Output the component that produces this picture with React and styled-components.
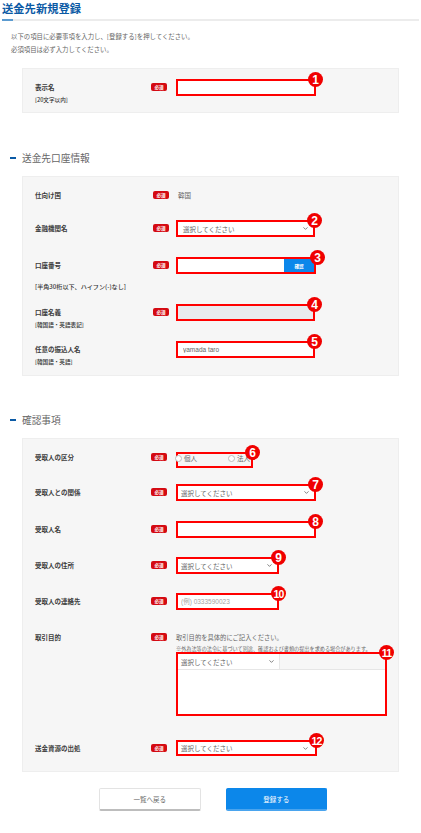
import React from "react";
import styled, { createGlobalStyle } from "styled-components";
import { ChevronDown } from "lucide-react";

const Global = createGlobalStyle`
  html, body { margin: 0; padding: 0; background: #fff; }
  body { font-family: "Noto Sans CJK JP", "Liberation Sans", sans-serif; color: #555; }
  * { box-sizing: border-box; }
`;

const Page = styled.div`
  width: 421px;
  height: 833px;
  overflow: hidden;
`;
const Title = styled.h1`
  margin: 0;
  padding-left: 2px;
  height: 19px;
  font-size: 11.3px;
  line-height: 17px;
  font-weight: 700;
  color: #0b5aa5;
`;
const TitleRule = styled.div`
  height: 2px;
  margin: 0 2px;
  background: linear-gradient(to right, #5b9bd0 0 11px, #ececec 11px);
`;
const Intro = styled.p`
  margin: 9px 0 0 11px;
  font-size: 6.4px;
  line-height: 13px;
  color: #666;
`;
const Heading = styled.h2`
  display: flex;
  align-items: center;
  margin: ${(p) => p.$top}px 0 11px 10px;
  height: 14px;
  font-size: 9.7px;
  font-weight: 400;
  color: #666;
  &::before {
    content: "";
    width: 6px;
    height: 2px;
    margin-right: 6px;
    background: #0b5aa5;
  }
`;
const Panel = styled.section`
  margin: ${(p) => p.$top || 0}px 22px 0;
  width: 377px;
  padding: 10px 0 0 12px;
  background: #f6f6f6;
  border: 1px solid #eeeeee;
`;
const Row = styled.div`
  display: grid;
  grid-template-columns: 116px 25px 1fr;
  align-items: start;
  height: ${(p) => p.$h}px;
`;
const LabelCell = styled.div`
  display: flex;
  flex-direction: column;
`;
const Label = styled.div`
  font-size: 6.5px;
  font-weight: 700;
  line-height: 17px;
  color: #3d3d3d;
`;
const Sub = styled.div`
  font-size: ${(p) => p.$size || 5.6}px;
  font-weight: 500;
  line-height: 8px;
  margin-top: ${(p) => p.$top ?? 0}px;
  color: #333;
  white-space: nowrap;
`;
const BadgeCell = styled.div`
  display: flex;
  align-items: center;
  height: 16px;
  padding-left: ${(p) => (p.$shift ? 2 : 0)}px;
`;
const Badge = styled.span`
  display: flex;
  align-items: center;
  justify-content: center;
  width: 16px;
  height: 8px;
  border-radius: 2px;
  background: #d40a12;
  color: #fff;
  font-size: 4.6px;
  font-weight: 700;
`;
const Field = styled.div`
  display: flex;
  flex-direction: column;
  align-items: flex-start;
  margin-top: ${(p) => p.$top || 0}px;
`;
const Frame = styled.div`
  position: relative;
  display: flex;
  flex-direction: ${(p) => (p.$column ? "column" : "row")};
  align-items: ${(p) => (p.$column ? "stretch" : "center")};
  width: ${(p) => p.$w}px;
  height: ${(p) => p.$hh || 17}px;
  border: 2px solid #ff0000;
  background: ${(p) => p.$bg || "#fff"};
`;
const Marker = styled.span`
  position: absolute;
  top: -9px;
  right: ${(p) => -9 + (p.$dx || 0)}px;
  display: flex;
  align-items: center;
  justify-content: center;
  width: 15px;
  height: 15px;
  border-radius: 50%;
  background: #f00000;
  color: #fff;
  font-family: "Liberation Sans", sans-serif;
  font-size: ${(p) => (p.$small ? 10.5 : 12)}px;
  letter-spacing: ${(p) => (p.$small ? -0.8 : 0)}px;
  font-weight: 700;
  z-index: 1;
`;
const TextInput = styled.input`
  flex: 1;
  min-width: 0;
  height: 100%;
  border: 0;
  outline: 0;
  padding: 0 0 0 ${(p) => p.$pad ?? 5}px;
  background: transparent;
  font: inherit;
  font-family: "Liberation Sans", "Noto Sans CJK JP", sans-serif;
  font-size: 6.5px;
  color: #666;
  &::placeholder { color: #a5a5a5; }
`;
const ConfirmButton = styled.button`
  width: 30px;
  height: 100%;
  margin-left: 4px;
  padding: 0;
  border: 0;
  background: #0c87ea;
  color: #fff;
  font: inherit;
  font-size: 4.6px;
  font-weight: 700;
`;
const SelectBox = styled.div`
  display: flex;
  flex: ${(p) => (p.$w ? "none" : 1)};
  width: ${(p) => (p.$w ? `${p.$w}px` : "auto")};
  align-items: center;
  justify-content: space-between;
  height: 100%;
  padding: 0 ${(p) => p.$right ?? 4}px 0 ${(p) => p.$pad ?? 3}px;
  font-size: 6.5px;
  color: #666;
  background: #fff;
  border-right: ${(p) => (p.$ruled ? "1px solid #e8e8e8" : "0")};
  svg { flex: none; color: #555; }
`;
const Plain = styled.div`
  font-size: 6.5px;
  line-height: 17px;
  padding-left: 2px;
  color: #666;
`;
const Radio = styled.span`
  flex: none;
  width: 7px;
  height: 7px;
  margin-left: ${(p) => p.$left}px;
  border: 1px solid #bdbdbd;
  border-radius: 50%;
  background: #fff;
`;
const RadioText = styled.span`
  margin-left: 2px;
  width: 14px;
  font-size: 6.5px;
  color: #666;
  white-space: nowrap;
`;
const RadioGroup = styled.div`
  display: flex;
  align-items: center;
  height: 100%;
  padding-bottom: 4px;
`;
const Lead = styled.div`
  margin-top: 1px;
  font-size: 6.3px;
  line-height: 15px;
  color: #666;
`;
const Hint = styled.div`
  font-size: 5.15px;
  line-height: 7px;
  color: #666;
  white-space: nowrap;
`;
const EditorBar = styled.div`
  display: flex;
  height: 16px;
  flex: none;
  background: #f7f7f7;
  border-bottom: 1px solid #e6e6e6;
`;
const Actions = styled.div`
  display: flex;
  gap: 25px;
  margin: 16px 0 0 99px;
`;
const ActionButton = styled.button`
  width: 101.5px;
  height: 23px;
  padding: 0;
  border-radius: 2px;
  font: inherit;
  font-size: 6.5px;
  border: 1px solid ${(p) => (p.$primary ? "#0c87ea" : "#e3e3e3")};
  border-bottom: 2px solid ${(p) => (p.$primary ? "#4aa4ee" : "#bdbdbd")};
  background: ${(p) => (p.$primary ? "#0c87ea" : "#fff")};
  color: ${(p) => (p.$primary ? "#fff" : "#666")};
`;

const Chevron = () => <ChevronDown size={7} strokeWidth={2.5} />;

const Required = ({ shift }) => (
  <BadgeCell $shift={shift}>
    <Badge>必須</Badge>
  </BadgeCell>
);

export default function App() {
  return (
    <Page>
      <Global />
      <Title>送金先新規登録</Title>
      <TitleRule />
      <Intro>
        以下の項目に必要事項を入力し、[登録する]を押してください。
        <br />
        必須項目は必ず入力してください。
      </Intro>

      <Panel $top={12}>
        <Row $h={33}>
          <LabelCell>
            <Label>表示名</Label>
            <Sub>[20文字以内]</Sub>
          </LabelCell>
          <Required />
          <Field>
            <Frame $w={140}>
              <TextInput />
              <Marker>1</Marker>
            </Frame>
          </Field>
        </Row>
      </Panel>

      <Heading $top={38}>送金先口座情報</Heading>
      <Panel>
        <Row $h={33}>
          <Label>仕向け国</Label>
          <Required shift />
          <Plain>韓国</Plain>
        </Row>
        <Row $h={37}>
          <Label>金融機関名</Label>
          <Required shift />
          <Field>
            <Frame $w={139}>
              <SelectBox $pad={5}>
                選択してください
                <Chevron />
              </SelectBox>
              <Marker>2</Marker>
            </Frame>
          </Field>
        </Row>
        <Row $h={47}>
          <LabelCell>
            <Label>口座番号</Label>
            <Sub $top={9} $size={6.1}>[半角30桁以下、ハイフン(-)なし]</Sub>
          </LabelCell>
          <Required shift />
          <Field>
            <Frame $w={140}>
              <TextInput />
              <ConfirmButton>確認</ConfirmButton>
              <Marker $dx={-2}>3</Marker>
            </Frame>
          </Field>
        </Row>
        <Row $h={37}>
          <LabelCell>
            <Label>口座名義</Label>
            <Sub>[韓国語・英語表記]</Sub>
          </LabelCell>
          <Required shift />
          <Field>
            <Frame $w={139} $bg="#e9eaee">
              <Marker>4</Marker>
            </Frame>
          </Field>
        </Row>
        <Row $h={34}>
          <LabelCell>
            <Label>任意の振込人名</Label>
            <Sub>[韓国語・英語]</Sub>
          </LabelCell>
          <span />
          <Field>
            <Frame $w={139}>
              <TextInput defaultValue="yamada taro" />
              <Marker>5</Marker>
            </Frame>
          </Field>
        </Row>
      </Panel>

      <Heading $top={37}>確認事項</Heading>
      <Panel>
        <Row $h={35}>
          <Label>受取人の区分</Label>
          <Required />
          <Field $top={3}>
            <Frame $w={77} $hh={16} $bg="transparent">
              <RadioGroup>
                <Radio $left={-3} />
                <RadioText>個人</RadioText>
                <Radio $left={30} />
                <RadioText>法人</RadioText>
              </RadioGroup>
              <Marker>6</Marker>
            </Frame>
          </Field>
        </Row>
        <Row $h={37}>
          <Label>受取人との関係</Label>
          <Required />
          <Field>
            <Frame $w={140}>
              <SelectBox>
                選択してください
                <Chevron />
              </SelectBox>
              <Marker>7</Marker>
            </Frame>
          </Field>
        </Row>
        <Row $h={36}>
          <Label>受取人名</Label>
          <Required />
          <Field>
            <Frame $w={140}>
              <TextInput />
              <Marker>8</Marker>
            </Frame>
          </Field>
        </Row>
        <Row $h={36}>
          <Label>受取人の住所</Label>
          <Required />
          <Field>
            <Frame $w={103}>
              <SelectBox>
                選択してください
                <Chevron />
              </SelectBox>
              <Marker>9</Marker>
            </Frame>
          </Field>
        </Row>
        <Row $h={36}>
          <Label>受取人の連絡先</Label>
          <Required />
          <Field>
            <Frame $w={103}>
              <TextInput $pad={3} placeholder="(例) 0333590023" />
              <Marker $small>10</Marker>
            </Frame>
          </Field>
        </Row>
        <Row $h={111}>
          <Label>取引目的</Label>
          <Required />
          <Field>
            <Lead>取引目的を具体的にご記入ください。</Lead>
            <Hint>※外為法等の法令に基づいて別途、確認および書類の提出を求める場合があります。</Hint>
            <Frame $w={211} $hh={64} $column>
              <EditorBar>
                <SelectBox $w={102} $right={4} $ruled>
                  選択してください
                  <Chevron />
                </SelectBox>
              </EditorBar>
              <Marker $small>11</Marker>
            </Frame>
          </Field>
        </Row>
        <Row $h={31}>
          <Label>送金資源の出処</Label>
          <Required />
          <Field>
            <Frame $w={141} $hh={16}>
              <SelectBox $right={6}>
                選択してください
                <Chevron />
              </SelectBox>
              <Marker $small>12</Marker>
            </Frame>
          </Field>
        </Row>
      </Panel>

      <Actions>
        <ActionButton>一覧へ戻る</ActionButton>
        <ActionButton $primary>登録する</ActionButton>
      </Actions>
    </Page>
  );
}
